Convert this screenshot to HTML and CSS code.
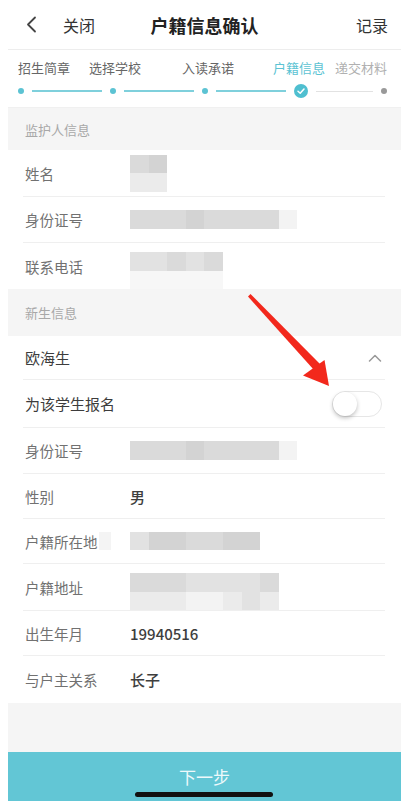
FILE: index.html
```html
<html>
    <head>
        <title>户籍信息确认</title>
        <meta charset="utf-8">
        <link rel="stylesheet" href="styles.css">
    </head>
    <body>
        <div class="screen">
            <div class="app">
                <header class="topbar">
                    <div class="topbar-left">
                        <svg class="back" width="11" height="17" viewBox="0 0 11 17"><path d="M9 1.5 L2 8.5 L9 15.5" fill="none" stroke="#444" stroke-width="1.8" stroke-linecap="round" stroke-linejoin="round"/></svg>
                        <span>关闭</span>
                    </div>
                    <h1>户籍信息确认</h1>
                    <div class="topbar-right">记录</div>
                </header>

                <div class="steps">
                    <div class="step-labels">
                        <span class="step-label">招生简章</span>
                        <span class="step-label s2">选择学校</span>
                        <span class="step-label s3">入读承诺</span>
                        <span class="step-label s4 active">户籍信息</span>
                        <span class="step-label s5 todo">递交材料</span>
                    </div>
                    <div class="track">
                        <span class="dot"></span>
                        <span class="line"></span>
                        <span class="dot"></span>
                        <span class="line"></span>
                        <span class="dot"></span>
                        <span class="line"></span>
                        <span class="check">
                            <svg width="14" height="14" viewBox="0 0 14 14"><circle cx="7" cy="7" r="7" fill="#4fbfd0"/><path d="M4 7.2 L6.2 9.2 L10 5" fill="none" stroke="#fff" stroke-width="1.5" stroke-linecap="round" stroke-linejoin="round"/></svg>
                        </span>
                        <span class="line grey"></span>
                        <span class="dot grey"></span>
                    </div>
                </div>

                <div class="section-title first">监护人信息</div>
                <div class="group">
                    <div class="row tall">
                        <span class="label">姓名</span>
                        <div class="blur">
                            <div class="blur-row"><i class="c2"></i><i class="c1"></i></div>
                            <div class="blur-row"><i class="c4"></i><i class="c4"></i></div>
                        </div>
                    </div>
                    <div class="row">
                        <span class="label">身份证号</span>
                        <div class="blur">
                            <div class="blur-row"><i class="c2"></i><i class="c2"></i><i class="c2"></i><i class="c1"></i><i class="c2"></i><i class="c2"></i><i class="c2"></i><i class="c2"></i><i class="c5"></i></div>
                        </div>
                    </div>
                    <div class="row">
                        <span class="label">联系电话</span>
                        <div class="blur low">
                            <div class="blur-row"><i class="c3"></i><i class="c3"></i><i class="c2"></i><i class="c3"></i><i class="c2"></i></div>
                            <div class="blur-row"><i class="c6"></i><i class="c6"></i><i class="c6"></i><i class="c6"></i><i class="c6"></i></div>
                        </div>
                    </div>
                </div>

                <div class="section-title">新生信息</div>
                <div class="group">
                    <div class="row short">
                        <span class="label strong">欧海生</span>
                        <svg class="fold" width="14" height="8" viewBox="0 0 14 8"><path d="M1.5 7 L7 1.5 L12.5 7" fill="none" stroke="#999" stroke-width="1.5" stroke-linecap="round" stroke-linejoin="round"/></svg>
                    </div>
                    <div class="row taller">
                        <span class="label strong">为该学生报名</span>
                        <span class="switch"><span class="knob"></span></span>
                    </div>
                    <div class="row">
                        <span class="label">身份证号</span>
                        <div class="blur">
                            <div class="blur-row"><i class="c2"></i><i class="c2"></i><i class="c2"></i><i class="c1"></i><i class="c2"></i><i class="c2"></i><i class="c2"></i><i class="c2"></i><i class="c5"></i></div>
                        </div>
                    </div>
                    <div class="row mid">
                        <span class="label">性别</span>
                        <span class="value">男</span>
                    </div>
                    <div class="row mid">
                        <span class="label">户籍所在地<b class="smudge"></b></span>
                        <div class="blur">
                            <div class="blur-row"><i class="c3"></i><i class="c1"></i><i class="c1"></i><i class="c2"></i><i class="c2"></i><i class="c1"></i><i class="c1"></i></div>
                        </div>
                    </div>
                    <div class="row tall">
                        <span class="label">户籍地址</span>
                        <div class="blur low">
                            <div class="blur-row"><i class="c2"></i><i class="c2"></i><i class="c2"></i><i class="c3"></i><i class="c3"></i><i class="c3"></i><i class="c3"></i><i class="c2"></i></div>
                            <div class="blur-row"><i class="c4"></i><i class="c4"></i><i class="c4"></i><i class="c5"></i><i class="c5"></i><i class="c4"></i><i class="c3"></i><i class="c4"></i></div>
                        </div>
                    </div>
                    <div class="row mid">
                        <span class="label">出生年月</span>
                        <span class="value">19940516</span>
                    </div>
                    <div class="row tall">
                        <span class="label">与户主关系</span>
                        <span class="value">长子</span>
                    </div>
                </div>

                <div class="filler"></div>
                <div class="next-btn">下一步</div>
            </div>

            <!-- annotation arrow over the page -->
            <svg class="arrow" width="401" height="801" viewBox="0 0 401 801">
                <polygon points="248,296.5 250.5,294 320,364 314,370" fill="#f2281c"/>
                <polygon points="329,386 303,375.5 324.5,360" fill="#f2281c"/>
            </svg>
            <div class="home-bar"></div>
        </div>
    </body>
</html>
```

FILE: styles.css
```css
html,
body {
    margin: 0;
    padding: 0;
    background-color: white;
    font-family: "Noto Sans CJK SC", "Noto Sans", sans-serif;
}
.screen {
    position: relative;
    width: 401px;
    height: 801px;
    overflow: hidden;
}
.app {
    margin-left: 8px;
    width: 393px;
    height: 801px;
    display: flex;
    flex-direction: column;
}

/* top bar */
.topbar {
    height: 50px;
    box-sizing: border-box;
    border-bottom: 1px solid #ededed;
    display: grid;
    grid-template-columns: 1fr auto 1fr;
    align-items: center;
}
.topbar-left {
    display: flex;
    align-items: center;
    padding-left: 18px;
    font-size: 16px;
    color: #333;
}
.topbar-left span {
    margin-left: 26px;
}
.topbar h1 {
    margin: 0;
    font-size: 18px;
    font-weight: bold;
    color: #222;
}
.topbar-right {
    text-align: right;
    padding-right: 13px;
    font-size: 16px;
    color: #333;
}

/* steps */
.steps {
    height: 58px;
    box-sizing: border-box;
    border-bottom: 1px solid #f0f0f0;
    padding-top: 9px;
}
.step-labels {
    display: flex;
    padding-left: 10px;
    height: 18px;
    line-height: 18px;
}
.step-label {
    width: 52px;
    font-size: 13px;
    color: #666;
    white-space: nowrap;
}
.s2 { margin-left: 19px; }
.s3 { margin-left: 41px; }
.s4 { margin-left: 39px; }
.s5 { margin-left: 10px; }
.step-label.active {
    color: #5cc3d3;
}
.step-label.todo {
    color: #b0b0b0;
}
.track {
    display: flex;
    align-items: center;
    gap: 8px;
    height: 14px;
    margin-top: 7px;
    padding-left: 10px;
}
.dot {
    width: 6px;
    height: 6px;
    border-radius: 50%;
    background-color: #5cc3d3;
}
.dot.grey {
    background-color: #999;
}
.line {
    width: 70px;
    height: 1.5px;
    background-color: #7fd0dc;
}
.line.grey {
    width: 57px;
    height: 1px;
    background-color: #e2e2e2;
}
.check {
    display: flex;
}

/* sections */
.section-title {
    height: 47px;
    background-color: #f5f5f5;
    padding-left: 17px;
    font-size: 13px;
    color: #a8a8a8;
    display: flex;
    align-items: center;
}
.section-title.first {
    height: 42px;
}
.group {
    padding: 0 16px 0 15px;
}
.row {
    height: 46px;
    box-sizing: border-box;
    border-bottom: 1px solid #efefef;
    display: flex;
    align-items: center;
}
.row.short {
    height: 44px;
}
.row.mid {
    height: 45px;
}
.row.tall {
    height: 47px;
}
.row.taller {
    height: 48px;
}
.row:last-child {
    border-bottom: none;
}
.label {
    width: 105px;
    flex-shrink: 0;
    padding-left: 2px;
    font-size: 14.5px;
    color: #717171;
    white-space: nowrap;
    display: flex;
    align-items: center;
}
.label.strong {
    color: #3c3c3c;
    font-size: 15px;
}
.smudge {
    width: 12px;
    height: 18px;
    margin-left: 1px;
    background-color: #f4f4f4;
}
.value {
    font-size: 15px;
    font-weight: 500;
    color: #3e3e3e;
}
.fold {
    margin-left: auto;
    margin-right: 3px;
}

/* toggle */
.switch {
    margin-left: auto;
    margin-right: 3px;
    width: 50px;
    height: 26px;
    box-sizing: border-box;
    border: 1px solid #e6e6e6;
    border-radius: 14px;
    background-color: white;
    position: relative;
}
.knob {
    position: absolute;
    left: 0;
    top: 0;
    width: 24px;
    height: 24px;
    border-radius: 50%;
    background-color: white;
    box-shadow: 0 2px 4px rgba(0, 0, 0, 0.25);
}

/* masked values */
.blur {
    display: flex;
    flex-direction: column;
}
.blur.low {
    margin-top: 9px;
}
.blur-row {
    display: flex;
}
.blur-row i {
    width: 18.6px;
    height: 18.5px;
}
.c1 { background-color: #d3d3d3; }
.c2 { background-color: #dadada; }
.c3 { background-color: #e2e2e2; }
.c4 { background-color: #ebebeb; }
.c5 { background-color: #f3f3f3; }
.c6 { background-color: #f7f7f7; }

/* bottom */
.filler {
    flex: 1;
    background-color: #f5f5f5;
}
.next-btn {
    height: 49px;
    background-color: #62c6d5;
    color: #eef9fb;
    font-size: 17px;
    display: flex;
    justify-content: center;
    align-items: center;
}

/* overlays */
.arrow {
    position: absolute;
    left: 0;
    top: 0;
    pointer-events: none;
}
.home-bar {
    position: absolute;
    left: 135px;
    top: 792px;
    width: 138px;
    height: 5px;
    border-radius: 3px;
    background-color: #111;
}
```
